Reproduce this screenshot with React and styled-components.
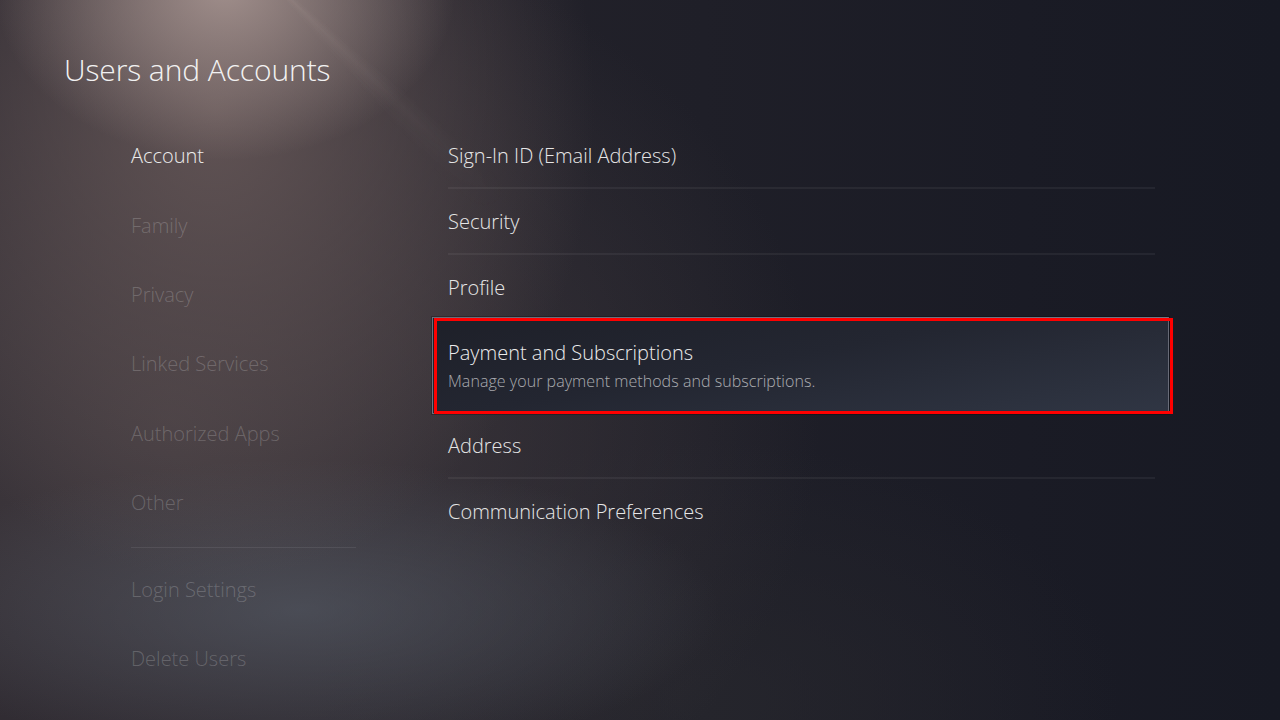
import React from "react";
import styled, { createGlobalStyle } from "styled-components";

const Global = createGlobalStyle`
  html, body { margin: 0; padding: 0; background: #1b1c26; }
  body { font-family: "Open Sans", "Noto Sans", sans-serif; }
  * { box-sizing: border-box; }
`;

const Page = styled.div`
  position: relative;
  width: 1280px;
  height: 720px;
  overflow: hidden;
  display: flex;
  flex-direction: column;
  color: #ececec;
  background:
    radial-gradient(ellipse 230px 170px at 225px -10px, rgba(185,165,160,0.75), rgba(185,165,160,0) 100%),
    radial-gradient(ellipse 380px 470px at 215px 110px, rgba(105,90,90,0.85), rgba(105,90,90,0) 100%),
    radial-gradient(ellipse 420px 150px at 300px 610px, rgba(90,98,110,0.55), rgba(90,98,110,0) 100%),
    radial-gradient(ellipse 650px 520px at 170px 420px, rgba(72,64,68,0.85), rgba(72,64,68,0) 100%),
    radial-gradient(ellipse 420px 260px at 700px 700px, rgba(40,40,46,0.7), rgba(40,40,46,0) 100%),
    linear-gradient(90deg, #26232b 0%, #25232b 25%, #1f1f28 55%, #1a1b25 80%, #171923 100%);

  &::before {
    content: "";
    position: absolute;
    inset: 0;
    pointer-events: none;
    background: conic-gradient(from 130deg at 250px -40px, transparent 0deg, rgba(255,235,225,0.06) 4deg, transparent 9deg, transparent 360deg);
    -webkit-mask-image: radial-gradient(circle at 260px 0px, #000 0px, rgba(0,0,0,0.6) 160px, transparent 320px);
    mask-image: radial-gradient(circle at 260px 0px, #000 0px, rgba(0,0,0,0.6) 160px, transparent 320px);
  }
`;

const Title = styled.h1`
  position: relative;
  margin: 0;
  padding: 50px 0 0 64px;
  font-size: 30px;
  line-height: 40px;
  font-weight: 300;
  color: #f2f2f2;
  letter-spacing: -0.1px;
`;

const Body = styled.div`
  position: relative;
  display: flex;
  flex-direction: row;
  margin-top: 30px;
`;

const Nav = styled.nav`
  width: 225px;
  margin-left: 131px;
  margin-top: 1px;
  display: flex;
  flex-direction: column;
`;

const NavItem = styled.div`
  height: 69.4px;
  display: flex;
  align-items: center;
  font-size: 20px;
  font-weight: 300;
  color: ${(p) => (p.$active ? "#ececec" : "rgba(255,255,255,0.2)")};
`;

const NavDivider = styled.div`
  height: 1px;
  margin: 10px 0 6px;
  background: rgba(255,255,255,0.08);
`;

const List = styled.div`
  width: 707px;
  margin-left: 92px;
  margin-top: 3px;
  display: flex;
  flex-direction: column;
`;

const Row = styled.div`
  height: ${(p) => (p.$divider ? "66px" : "64px")};
  display: flex;
  align-items: center;
  font-size: 20px;
  font-weight: 300;
  color: #e6e6e6;
  border-bottom: ${(p) => (p.$divider ? "2px solid rgba(255,255,255,0.055)" : "none")};
`;

const Card = styled.div`
  position: relative;
  height: 97px;
  margin: -2px -14px -1px -16px;
  padding: 1px 0 0 15px;
  display: flex;
  flex-direction: column;
  justify-content: center;
  gap: 5px;
  border: 1px solid rgba(190,196,210,0.45);
  background: linear-gradient(170deg, #1e2029 0%, #232631 45%, #303644 100%);
  box-shadow: 0 0 0 1px rgba(0,0,0,0.25);

  &::after {
    content: "";
    position: absolute;
    top: 0px;
    left: 1px;
    right: -5px;
    bottom: -1px;
    border: 3px solid #ff0000;
    pointer-events: none;
  }
`;

const CardTitle = styled.div`
  font-size: 20px;
  font-weight: 300;
  color: #ececec;
  line-height: 26px;
`;

const CardDesc = styled.div`
  font-size: 16px;
  font-weight: 300;
  color: rgba(255,255,255,0.62);
  line-height: 21px;
  letter-spacing: 0.05px;
`;

const navItems = [
  { label: "Account", active: true },
  { label: "Family" },
  { label: "Privacy" },
  { label: "Linked Services" },
  { label: "Authorized Apps" },
  { label: "Other" },
];

const navItems2 = [{ label: "Login Settings" }, { label: "Delete Users" }];

export default function App() {
  return (
    <>
      <Global />
      <Page>
        <Title>Users and Accounts</Title>
        <Body>
          <Nav>
            {navItems.map((n) => (
              <NavItem key={n.label} $active={n.active}>
                {n.label}
              </NavItem>
            ))}
            <NavDivider />
            {navItems2.map((n) => (
              <NavItem key={n.label}>{n.label}</NavItem>
            ))}
          </Nav>
          <List>
            <Row $divider>Sign-In ID (Email Address)</Row>
            <Row $divider>Security</Row>
            <Row>Profile</Row>
            <Card>
              <CardTitle>Payment and Subscriptions</CardTitle>
              <CardDesc>Manage your payment methods and subscriptions.</CardDesc>
            </Card>
            <Row $divider>Address</Row>
            <Row>Communication Preferences</Row>
          </List>
        </Body>
      </Page>
    </>
  );
}
